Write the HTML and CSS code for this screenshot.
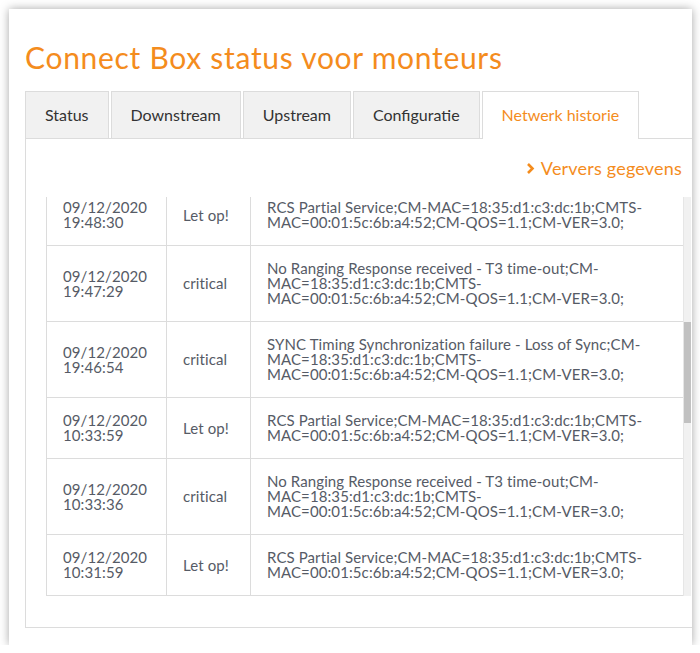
FILE: index.html
```html
<!DOCTYPE html>
<html>
    <head>
        <meta charset="utf-8">
        <title>Connect Box status voor monteurs</title>
        <link rel="stylesheet" href="styles.css">
    </head>
    <body>
    <div class="panel">
        <h1 class="title">Connect Box status voor monteurs</h1>
        <ul class="tabs">
            <li>Status</li>
            <li>Downstream</li>
            <li>Upstream</li>
            <li>Configuratie</li>
            <li class="active">Netwerk historie</li>
        </ul>
        <div class="tab-body">
            <div class="refresh">
                <svg width="9" height="13" viewBox="0 0 9 13"><polyline points="2,2 6.5,6.5 2,11" fill="none" stroke="#f48c1d" stroke-width="2.6"/></svg>
                <span>Ververs gegevens</span>
            </div>
            <div class="log">
                <div class="log-view">
                    <table class="events">
                        <colgroup>
                            <col class="c-time">
                            <col class="c-level">
                            <col class="c-msg">
                        </colgroup>
                        <tr>
                            <td>09/12/2020 19:48:30</td>
                            <td>Let op!</td>
                            <td>RCS Partial Service;CM-MAC=18:35:d1:c3:dc:1b;CMTS-MAC=00:01:5c:6b:a4:52;CM-QOS=1.1;CM-VER=3.0;</td>
                        </tr>
                        <tr>
                            <td>09/12/2020 19:47:29</td>
                            <td>critical</td>
                            <td>No Ranging Response received - T3 time-out;CM-MAC=18:35:d1:c3:dc:1b;CMTS-MAC=00:01:5c:6b:a4:52;CM-QOS=1.1;CM-VER=3.0;</td>
                        </tr>
                        <tr>
                            <td>09/12/2020 19:46:54</td>
                            <td>critical</td>
                            <td>SYNC Timing Synchronization failure - Loss of Sync;CM-MAC=18:35:d1:c3:dc:1b;CMTS-MAC=00:01:5c:6b:a4:52;CM-QOS=1.1;CM-VER=3.0;</td>
                        </tr>
                        <tr>
                            <td>09/12/2020 10:33:59</td>
                            <td>Let op!</td>
                            <td>RCS Partial Service;CM-MAC=18:35:d1:c3:dc:1b;CMTS-MAC=00:01:5c:6b:a4:52;CM-QOS=1.1;CM-VER=3.0;</td>
                        </tr>
                        <tr>
                            <td>09/12/2020 10:33:36</td>
                            <td>critical</td>
                            <td>No Ranging Response received - T3 time-out;CM-MAC=18:35:d1:c3:dc:1b;CMTS-MAC=00:01:5c:6b:a4:52;CM-QOS=1.1;CM-VER=3.0;</td>
                        </tr>
                        <tr>
                            <td>09/12/2020 10:31:59</td>
                            <td>Let op!</td>
                            <td>RCS Partial Service;CM-MAC=18:35:d1:c3:dc:1b;CMTS-MAC=00:01:5c:6b:a4:52;CM-QOS=1.1;CM-VER=3.0;</td>
                        </tr>
                    </table>
                </div>
                <div class="scrollbar"><div class="thumb"></div></div>
            </div>
        </div>
    </div>
    </body>
</html>
```

FILE: styles.css
```css
body{
    margin: 0;
    background: #fff;
    font-family: Lato, "Open Sans", sans-serif;
}
.panel{
    margin: 9px 0 0 9px;
    width: 667px;
    height: 636px;
    padding-left: 16px;
    background: #fff;
    box-shadow: 0 0 9px rgba(0, 0, 0, 0.35);
    overflow: hidden;
}
.title{
    margin: 30px 0 16px;
    font-size: 30px;
    line-height: 36px;
    font-weight: normal;
    letter-spacing: 0.7px;
    color: #f48c1d;
}
.tabs{
    display: flex;
    margin: 0;
    padding: 0;
    list-style: none;
}
.tabs li{
    height: 46px;
    line-height: 46px;
    padding: 0 19px;
    margin-right: 2px;
    border: 1px solid #dcdcdc;
    border-bottom: none;
    background: #f1f1f1;
    font-size: 16px;
    color: #333;
}
.tabs li.active{
    background: #fff;
    color: #f48c1d;
    height: 47px;
    margin-bottom: -1px;
}
.tab-body{
    margin-right: -20px;
    padding: 17px 20px 31px 20px;
    border: 1px solid #dcdcdc;
}
.refresh{
    display: flex;
    justify-content: flex-end;
    align-items: center;
    gap: 6px;
    padding-right: 9px;
    margin-bottom: 17px;
    height: 24px;
    font-size: 18px;
    letter-spacing: 0.2px;
    color: #f48c1d;
}
.log{
    display: flex;
    height: 399px;
}
.log-view{
    width: 640px;
    overflow: hidden;
}
.events{
    width: 640px;
    margin-top: -13px;
    border-collapse: collapse;
    table-layout: fixed;
    font-size: 15px;
    line-height: 15px;
    letter-spacing: 0.1px;
    color: #565b66;
}
.c-time{
    width: 120px;
}
.c-level{
    width: 84px;
}
.events td{
    padding: 15px 16px;
    border: 1px solid #dcdcdc;
    vertical-align: middle;
}
.scrollbar{
    width: 7px;
    background: #f1f1f1;
    border-left: 1px solid #e6e6e6;
}
.thumb{
    margin: 125px 0 0 0;
    width: 7px;
    height: 101px;
    background: #c1c1c1;
}
```
